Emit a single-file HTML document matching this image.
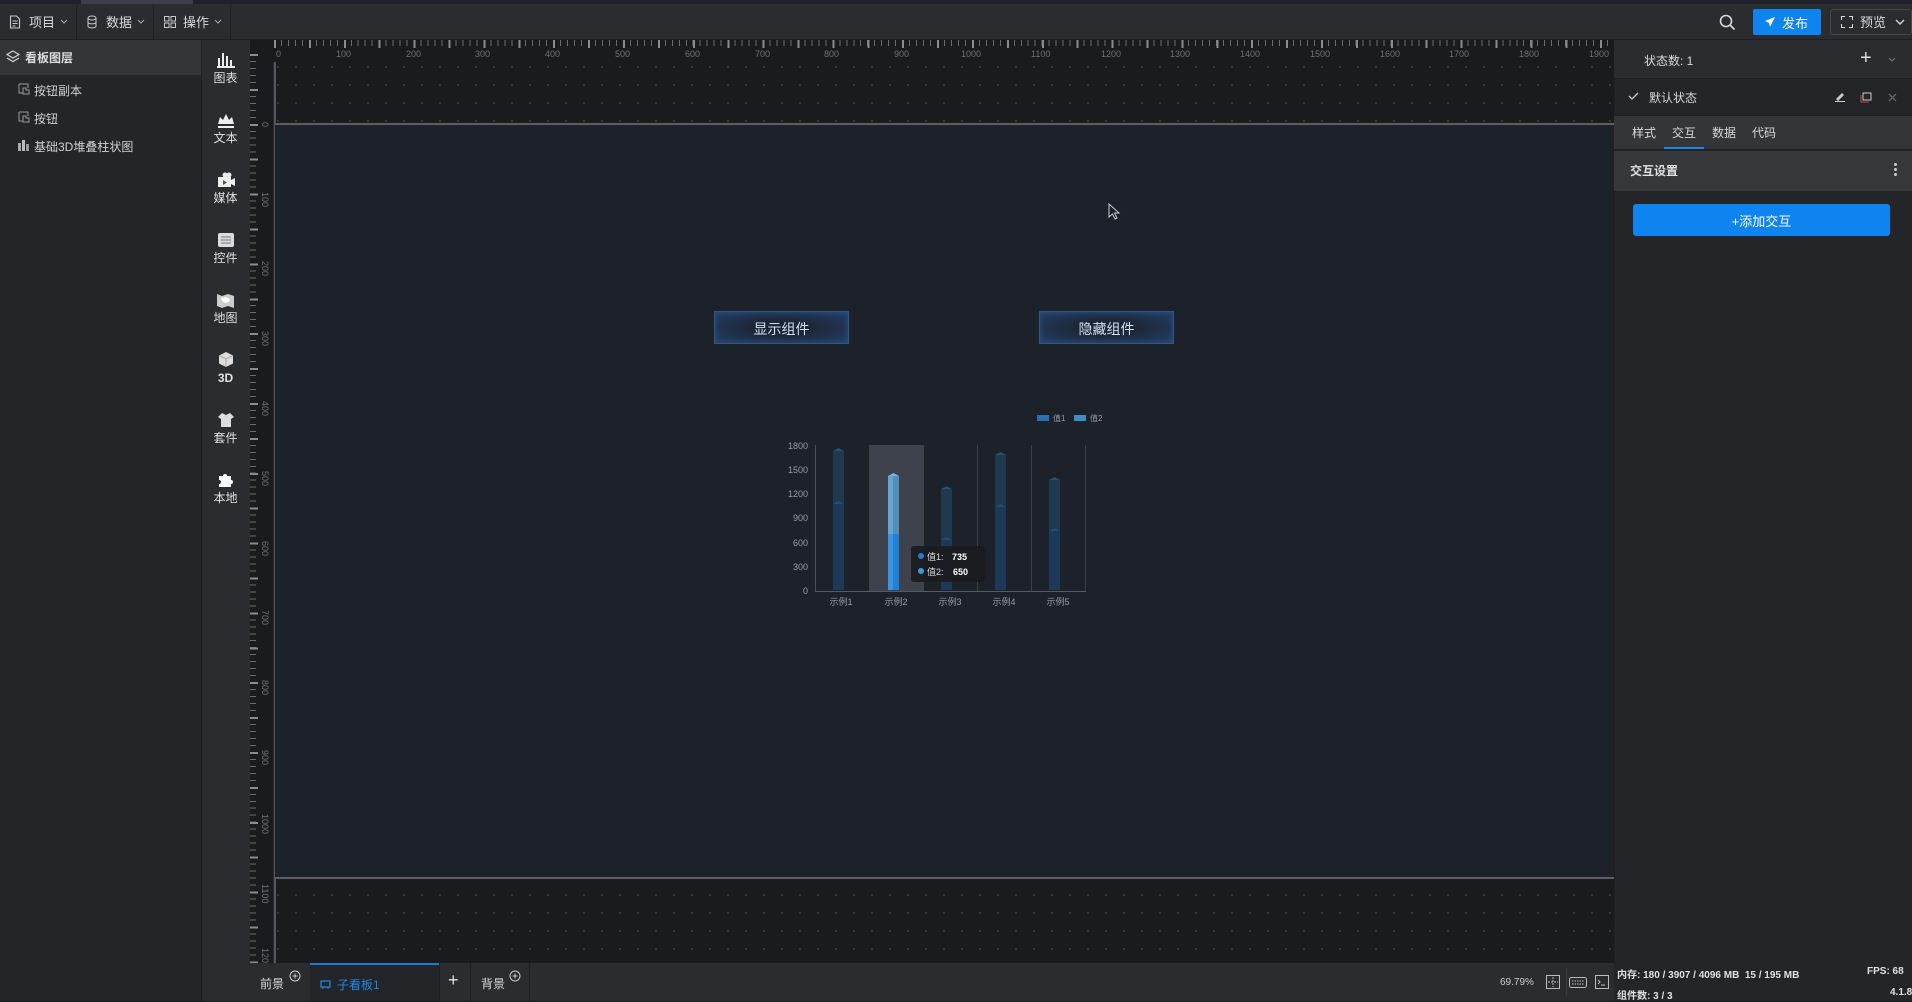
<!DOCTYPE html>
<html><head><meta charset="utf-8"><style>
*{margin:0;padding:0;box-sizing:border-box}
body{width:1912px;height:1001px;overflow:hidden;background:#1a1b1d;font-family:"Liberation Sans","Noto Sans CJK SC",sans-serif;color:#d0d2d6;font-size:12px;position:relative}
.a{position:absolute}
.t{white-space:nowrap}
</style></head><body>
<div class="a" style="left:0;top:0;width:1912px;height:4px;background:#1e2228"></div>
<div class="a" style="left:81px;top:0;width:112px;height:4px;background:#3a3f48"></div>
<div class="a" style="left:0;top:4px;width:1912px;height:36px;background:#2b2c30;border-bottom:1px solid #1f2023"></div>
<div class="a" style="left:76px;top:5px;width:1px;height:34px;background:#1f2023"></div>
<div class="a" style="left:153px;top:5px;width:1px;height:34px;background:#1f2023"></div>
<div class="a" style="left:230px;top:5px;width:1px;height:34px;background:#1f2023"></div>
<svg class="a" style="left:9px;top:15px" width="12" height="14" viewBox="0 0 12 14"><path d="M1.5 1h6l3 3v9h-9z M3.5 6h5 M3.5 8.5h5 M3.5 11h3" fill="none" stroke="#c8c9cc" stroke-width="1.1"/></svg>
<div class="a t" style="left:29px;top:12px;font-size:13px;color:#d8d9dc">项目</div>
<svg class="a" style="left:60px;top:19px" width="8" height="6"><path d="M1 1l3 3 3-3" fill="none" stroke="#aaa"/></svg>
<svg class="a" style="left:87px;top:15px" width="10" height="14"><ellipse cx="5" cy="3" rx="4" ry="2" fill="none" stroke="#c8c9cc"/><path d="M1 3v8c0 2.5 8 2.5 8 0V3 M1 7c0 2.5 8 2.5 8 0" fill="none" stroke="#c8c9cc"/></svg>
<div class="a t" style="left:106px;top:12px;font-size:13px;color:#d8d9dc">数据</div>
<svg class="a" style="left:137px;top:19px" width="8" height="6"><path d="M1 1l3 3 3-3" fill="none" stroke="#aaa"/></svg>
<svg class="a" style="left:164px;top:16px" width="12" height="12"><rect x="0.5" y="0.5" width="4.5" height="4.5" fill="none" stroke="#c8c9cc"/><rect x="7" y="0.5" width="4.5" height="4.5" fill="none" stroke="#c8c9cc"/><rect x="0.5" y="7" width="4.5" height="4.5" fill="none" stroke="#c8c9cc"/><rect x="7" y="7" width="4.5" height="4.5" fill="none" stroke="#c8c9cc"/></svg>
<div class="a t" style="left:183px;top:12px;font-size:13px;color:#d8d9dc">操作</div>
<svg class="a" style="left:214px;top:19px" width="8" height="6"><path d="M1 1l3 3 3-3" fill="none" stroke="#aaa"/></svg>
<svg class="a" style="left:1719px;top:14px" width="17" height="17"><circle cx="7" cy="7" r="5.5" fill="none" stroke="#d8d9dc" stroke-width="1.6"/><path d="M11 11l4.5 4.5" stroke="#d8d9dc" stroke-width="1.8"/></svg>
<div class="a" style="left:1753px;top:9px;width:68px;height:26px;background:#0d84f0;border-radius:2px"></div>
<svg class="a" style="left:1764px;top:16px" width="12" height="12"><path d="M11 1L1 5l4 2 1 4z" fill="#fff"/></svg>
<div class="a t" style="left:1782px;top:13px;font-size:13px;color:#fff">发布</div>
<div class="a" style="left:1830px;top:9px;width:82px;height:26px;border:1px solid #45474c;border-radius:3px"></div>
<svg class="a" style="left:1841px;top:16px" width="12" height="12"><path d="M0.5 4V0.5H4 M8 0.5h3.5V4 M11.5 8v3.5H8 M4 11.5H0.5V8" fill="none" stroke="#d8d9dc"/></svg>
<div class="a t" style="left:1860px;top:12px;font-size:13px;color:#d8d9dc">预览</div>
<svg class="a" style="left:1895px;top:19px" width="10" height="6"><path d="M1 1l4 4 4-4" fill="none" stroke="#d8d9dc" stroke-width="1.4"/></svg>

<div class="a" style="left:0;top:40px;width:201px;height:961px;background:#242528"></div>
<div class="a" style="left:0;top:40px;width:201px;height:35px;background:#343539"></div>
<svg class="a" style="left:6px;top:50px" width="14" height="13"><path d="M7 1l6 3.5-6 3.5-6-3.5z M1 8l6 3.5 6-3.5" fill="none" stroke="#d0d2d6" stroke-width="1.2"/></svg>
<div class="a t" style="left:25px;top:49px;font-size:12px;font-weight:bold;color:#dcdde0">看板图层</div>
<svg class="a" style="left:18px;top:83px" width="12" height="12"><path d="M1 1h9v4 M1 1v9h4 M5 5v6h6V7H8V5z" fill="none" stroke="#999" stroke-width="1"/></svg>
<div class="a t" style="left:34px;top:82px;font-size:12px;color:#d0d2d6">按钮副本</div>
<svg class="a" style="left:18px;top:111px" width="12" height="12"><path d="M1 1h9v4 M1 1v9h4 M5 5v6h6V7H8V5z" fill="none" stroke="#999" stroke-width="1"/></svg>
<div class="a t" style="left:34px;top:110px;font-size:12px;color:#d0d2d6">按钮</div>
<svg class="a" style="left:18px;top:139px" width="12" height="12"><rect x="0" y="4" width="3" height="8" fill="#aaa"/><rect x="4" y="1" width="3" height="11" fill="#bbb"/><rect x="8" y="5" width="3" height="7" fill="#999"/></svg>
<div class="a t" style="left:34px;top:138px;font-size:12px;color:#d0d2d6">基础3D堆叠柱状图</div>

<div class="a" style="left:201px;top:40px;width:49px;height:961px;background:#2b2c30"></div>
<div class="a" style="left:201px;top:40px;width:1px;height:961px;background:#1f2023"></div>
<div style="position:absolute;left:201px;top:52px;width:49px;text-align:center;color:#e0e1e4;font-size:12px;line-height:14px">
<div style="height:60px"><svg width="20" height="16"><rect x="2" y="6" width="2" height="8" fill="#eee"/><rect x="6" y="1" width="2" height="13" fill="#eee"/><rect x="10" y="4" width="2" height="10" fill="#eee"/><rect x="14" y="8" width="2" height="6" fill="#eee"/><rect x="1" y="14" width="18" height="2" fill="#eee"/></svg><br>图表</div>
<div style="height:60px"><svg width="20" height="16"><path d="M2 12l2-7 3 3 3-6 3 6 3-3 2 7z" fill="#eee"/><rect x="2" y="14" width="16" height="2" fill="#eee"/></svg><br>文本</div>
<div style="height:60px"><svg width="20" height="16"><circle cx="9" cy="3" r="2.5" fill="#eee"/><circle cx="13" cy="3" r="2.5" fill="#eee"/><rect x="2" y="5" width="13" height="10" fill="#eee"/><path d="M15 8l4-2v8l-4-2z" fill="#eee"/><path d="M7 8v5l4-2.5z" fill="#555"/></svg><br>媒体</div>
<div style="height:60px"><svg width="20" height="16"><rect x="2" y="1" width="16" height="14" rx="2" fill="#ddd"/><path d="M5 5h10 M5 8h10 M5 11h10" stroke="#777"/></svg><br>控件</div>
<div style="height:60px"><svg width="20" height="16"><path d="M1 2l5 2 6-2 6 2v12l-6-2-6 2-5-2z" fill="#ccc"/><path d="M5 6l5-1 4 2-1 3-4 1-3-2z" fill="#fff"/></svg><br>地图</div>
<div style="height:60px"><svg width="20" height="16"><path d="M10 0l7 3.5v8L10 15 3 11.5v-8z" fill="#ddd"/><path d="M3 3.5L10 7l7-3.5 M10 7v8" stroke="#aaa" fill="none"/></svg><br><b>3D</b></div>
<div style="height:60px"><svg width="20" height="16"><path d="M6 1l4 2 4-2 4 4-3 2v8H5V7L2 5z" fill="#ddd"/></svg><br>套件</div>
<div style="height:60px"><svg width="20" height="16"><path d="M3 4h4a2 2 0 1 1 4 0h4v4a2 2 0 1 1 0 4v3H3v-3a2 2 0 1 0 0-4z" fill="#fff"/></svg><br>本地</div>
</div>

<div class="a" style="left:250px;top:40px;width:1364px;height:22px;background:#1a1b1d"></div>
<div class="a" style="left:274px;top:40px;width:1340px;height:6px;background:repeating-linear-gradient(90deg,#6a6c70 0 1px,transparent 1px 6.979px)"></div>
<div class="a" style="left:274px;top:40px;width:1340px;height:8px;background:repeating-linear-gradient(90deg,#8a8c90 0 2px,transparent 2px 34.9px)"></div>
<div class="a" style="left:250px;top:62px;width:24px;height:901px;background:#1a1b1d;border-right:1px solid #2a2b2e"></div>
<div class="a" style="left:250px;top:54px;width:6px;height:909px;background:repeating-linear-gradient(180deg,#6a6c70 0 1px,transparent 1px 6.979px)"></div>
<div class="a" style="left:250px;top:54px;width:8px;height:909px;background:repeating-linear-gradient(180deg,#8a8c90 0 2px,transparent 2px 34.9px)"></div>
<div style="position:absolute;left:0;top:49px;font-size:9px;color:#6f7276">
<span class="a t" style="left:276px">0</span><span class="a t" style="left:336px">100</span><span class="a t" style="left:406px">200</span><span class="a t" style="left:475px">300</span><span class="a t" style="left:545px">400</span><span class="a t" style="left:615px">500</span><span class="a t" style="left:685px">600</span><span class="a t" style="left:755px">700</span><span class="a t" style="left:824px">800</span><span class="a t" style="left:894px">900</span><span class="a t" style="left:961px">1000</span><span class="a t" style="left:1031px">1100</span><span class="a t" style="left:1101px">1200</span><span class="a t" style="left:1170px">1300</span><span class="a t" style="left:1240px">1400</span><span class="a t" style="left:1310px">1500</span><span class="a t" style="left:1380px">1600</span><span class="a t" style="left:1449px">1700</span><span class="a t" style="left:1519px">1800</span><span class="a t" style="left:1589px">1900</span>
</div>
<div style="position:absolute;left:258px;top:-4px;font-size:9px;color:#6f7276">
<span class="a t" style="top:126px;transform:rotate(90deg);transform-origin:0 0;left:12px">0</span>
<span class="a t" style="top:196px;transform:rotate(90deg);transform-origin:0 0;left:12px">100</span>
<span class="a t" style="top:265px;transform:rotate(90deg);transform-origin:0 0;left:12px">200</span>
<span class="a t" style="top:335px;transform:rotate(90deg);transform-origin:0 0;left:12px">300</span>
<span class="a t" style="top:405px;transform:rotate(90deg);transform-origin:0 0;left:12px">400</span>
<span class="a t" style="top:475px;transform:rotate(90deg);transform-origin:0 0;left:12px">500</span>
<span class="a t" style="top:545px;transform:rotate(90deg);transform-origin:0 0;left:12px">600</span>
<span class="a t" style="top:614px;transform:rotate(90deg);transform-origin:0 0;left:12px">700</span>
<span class="a t" style="top:684px;transform:rotate(90deg);transform-origin:0 0;left:12px">800</span>
<span class="a t" style="top:754px;transform:rotate(90deg);transform-origin:0 0;left:12px">900</span>
<span class="a t" style="top:818px;transform:rotate(90deg);transform-origin:0 0;left:12px">1000</span>
<span class="a t" style="top:888px;transform:rotate(90deg);transform-origin:0 0;left:12px">1100</span>
<span class="a t" style="top:952px;transform:rotate(90deg);transform-origin:0 0;left:12px">1200</span>
</div>

<div class="a" style="left:275px;top:62px;width:1339px;height:901px;background-color:#1a1b1d;background-image:radial-gradient(circle,#3a3b3f 0.9px,transparent 1.2px);background-size:18px 18px;background-position:-6px -4px"></div>
<div class="a" style="left:274px;top:62px;width:2px;height:901px;background:#55575b"></div>
<div class="a" style="left:275px;top:123px;width:1339px;height:756px;background:#1c212a;border-top:2px solid #5c5f64;border-bottom:2px solid #5c5f64"></div>

<div class="a" style="left:714px;top:311px;width:135px;height:33px;border:1px solid #2f5585;background:radial-gradient(ellipse at center,#1d2636 30%,#24406a 100%);box-shadow:inset 0 0 6px #2a5080"></div>
<div class="a t" style="left:714px;top:319px;width:135px;text-align:center;font-size:14px;color:#cfe0f2">显示组件</div>
<div class="a" style="left:1039px;top:311px;width:135px;height:33px;border:1px solid #2f5585;background:radial-gradient(ellipse at center,#1d2636 30%,#24406a 100%);box-shadow:inset 0 0 6px #2a5080"></div>
<div class="a t" style="left:1039px;top:319px;width:135px;text-align:center;font-size:14px;color:#cfe0f2">隐藏组件</div>

<svg class="a" style="left:760px;top:400px" width="360" height="220" viewBox="760 400 360 220" font-family="Liberation Sans, Noto Sans CJK SC, sans-serif">
<rect x="869" y="445" width="55" height="146" fill="#3d424c"/>
<g stroke="#3a3f47"><line x1="977.5" y1="445" x2="977.5" y2="591"/><line x1="1031.5" y1="445" x2="1031.5" y2="591"/><line x1="1085.5" y1="445" x2="1085.5" y2="591"/></g>
<line x1="815.5" y1="445" x2="815.5" y2="591" stroke="#4a4e56"/>
<line x1="815" y1="591.5" x2="1086" y2="591.5" stroke="#555a62"/>
<g fill="#9a9da3" font-size="9" text-anchor="end"><text x="808" y="449">1800</text><text x="808" y="473">1500</text><text x="808" y="497">1200</text><text x="808" y="521">900</text><text x="808" y="546">600</text><text x="808" y="570">300</text><text x="808" y="594">0</text></g>
<g fill="#9a9da3" font-size="9" text-anchor="middle"><text x="841" y="605">示例1</text><text x="896" y="605">示例2</text><text x="950" y="605">示例3</text><text x="1004" y="605">示例4</text><text x="1058" y="605">示例5</text></g>
<rect x="1037" y="415" width="12" height="6" fill="#2a6fb0"/><text x="1053" y="421" font-size="8" fill="#9a9da3">值1</text>
<rect x="1074" y="415" width="12" height="6" fill="#3d8cc4"/><text x="1090" y="421" font-size="8" fill="#9a9da3">值2</text>
<g>
<rect x="833" y="504" width="11" height="86" fill="#1c3a58"/><rect x="833" y="451" width="11" height="53" fill="#1f3a4e"/><path d="M833 451l5.5-3 5.5 3z" fill="#29506e"/><path d="M833 504l5.5-3 5.5 3z" fill="#1f4d78"/>
<rect x="888" y="534" width="11" height="56" fill="#2281d4"/><rect x="888" y="476" width="11" height="58" fill="#4f8fb8"/><rect x="888" y="476" width="5" height="58" fill="#67a5d0"/><rect x="888" y="534" width="5" height="56" fill="#3a95e0"/><path d="M888 476l5.5-3 5.5 3z" fill="#6fb6e8"/>
<rect x="941" y="540" width="11" height="50" fill="#1c3a58"/><rect x="941" y="489" width="11" height="51" fill="#1f3a4e"/><path d="M941 489l5.5-3 5.5 3z" fill="#29506e"/><path d="M941 540l5.5-3 5.5 3z" fill="#1f4d78"/>
<rect x="995" y="507" width="11" height="83" fill="#1c3a58"/><rect x="995" y="455" width="11" height="52" fill="#1f3a4e"/><path d="M995 455l5.5-3 5.5 3z" fill="#29506e"/><path d="M995 507l5.5-3 5.5 3z" fill="#1f4d78"/>
<rect x="1049" y="531" width="11" height="59" fill="#1c3a58"/><rect x="1049" y="480" width="11" height="51" fill="#1f3a4e"/><path d="M1049 480l5.5-3 5.5 3z" fill="#29506e"/><path d="M1049 531l5.5-3 5.5 3z" fill="#1f4d78"/>
</g>
<rect x="911" y="546" width="75" height="36" rx="3" fill="#1a1c20" opacity="0.95"/>
<circle cx="921" cy="556" r="3" fill="#2a78c8"/><text x="927" y="560" font-size="9" fill="#ddd">值1:</text><text x="952" y="560" font-size="9" font-weight="bold" fill="#fff">735</text>
<circle cx="921" cy="571" r="3" fill="#3d9ad8"/><text x="927" y="575" font-size="9" fill="#ddd">值2:</text><text x="953" y="575" font-size="9" font-weight="bold" fill="#fff">650</text>
</svg>
<svg class="a" style="left:1108px;top:203px" width="14" height="18"><path d="M1 1v13l3.5-3 2.5 5 2-1-2.5-5h4.5z" fill="#1c212a" stroke="#ccc"/></svg>

<div class="a" style="left:250px;top:963px;width:1364px;height:38px;background:#2b2c30"></div>
<div class="a" style="left:310px;top:963px;width:129px;height:38px;background:#242528;border-top:2px solid #1c7ad6"></div>
<div class="a" style="left:439px;top:963px;width:1px;height:38px;background:#1f2023"></div>
<div class="a" style="left:470px;top:963px;width:1px;height:38px;background:#1f2023"></div>
<div class="a" style="left:529px;top:963px;width:1px;height:38px;background:#1f2023"></div>
<div class="a t" style="left:260px;top:975px;font-size:12px;color:#d8d9dc">前景</div>
<svg class="a" style="left:289px;top:970px" width="12" height="12"><circle cx="6" cy="6" r="5" fill="none" stroke="#ccc"/><path d="M6 3.5v5M3.5 6h5" stroke="#ccc"/></svg>
<svg class="a" style="left:320px;top:980px" width="11" height="10"><rect x="1" y="1" width="9" height="6" fill="none" stroke="#1e88e5" stroke-width="1.3"/><path d="M3 7v2M8 7v2" stroke="#1e88e5"/></svg>
<div class="a t" style="left:337px;top:976px;font-size:12px;color:#1e88e5">子看板1</div>
<div class="a t" style="left:448px;top:970px;font-size:18px;color:#e0e0e0">+</div>
<div class="a t" style="left:481px;top:975px;font-size:12px;color:#d8d9dc">背景</div>
<svg class="a" style="left:509px;top:970px" width="12" height="12"><circle cx="6" cy="6" r="5" fill="none" stroke="#ccc"/><path d="M6 3.5v5M3.5 6h5" stroke="#ccc"/></svg>
<div class="a t" style="left:1500px;top:977px;font-size:10px;color:#ccc">69.79%</div>
<svg class="a" style="left:1546px;top:975px" width="14" height="14"><rect x="0.5" y="0.5" width="13" height="13" fill="none" stroke="#bbb"/><path d="M7 2v10M2 7h10" stroke="#bbb" stroke-dasharray="2 1"/></svg>
<div class="a" style="left:1566px;top:968px;width:1px;height:28px;background:#3a3b3e"></div>
<svg class="a" style="left:1569px;top:977px" width="18" height="11"><rect x="0.5" y="0.5" width="17" height="10" rx="2" fill="none" stroke="#bbb"/><path d="M3 4h12M3 7h12" stroke="#bbb" stroke-dasharray="1.5 1"/></svg>
<svg class="a" style="left:1595px;top:975px" width="14" height="14"><rect x="0.5" y="0.5" width="13" height="13" fill="none" stroke="#bbb"/><path d="M3 5l2 2-2 2M6 10h4" stroke="#bbb" fill="none"/></svg>

<div class="a" style="left:1614px;top:40px;width:298px;height:961px;background:#242528;border-left:1px solid #1f2023"></div>
<div class="a" style="left:1614px;top:40px;width:298px;height:39px;background:#2b2c30;border-bottom:1px solid #1f2023"></div>
<div class="a t" style="left:1644px;top:52px;font-size:12px;color:#d8d9dc">状态数: 1</div>
<div class="a t" style="left:1860px;top:47px;font-size:20px;color:#ddd">+</div>
<svg class="a" style="left:1888px;top:57px" width="8" height="5"><path d="M1 1l3 3 3-3" fill="none" stroke="#777"/></svg>
<svg class="a" style="left:1628px;top:92px" width="11" height="9"><path d="M1 4l3 3 6-6" fill="none" stroke="#ccc" stroke-width="1.3"/></svg>
<div class="a t" style="left:1649px;top:89px;font-size:12px;color:#d8d9dc">默认状态</div>
<svg class="a" style="left:1834px;top:92px" width="11" height="10"><path d="M2 7l6-6 2 2-6 6z" fill="#ccc"/><path d="M1 9.5h10" stroke="#ccc"/></svg>
<svg class="a" style="left:1860px;top:92px" width="12" height="11"><rect x="3" y="1" width="8" height="7" fill="none" stroke="#ccc"/><path d="M1 3v7h8" fill="none" stroke="#c44"/></svg>
<svg class="a" style="left:1888px;top:93px" width="9" height="9"><path d="M1 1l7 7M8 1l-7 7" stroke="#666" stroke-width="1.3"/></svg>
<div class="a" style="left:1614px;top:115px;width:298px;height:35px;background:#343539;border-top:1px solid #1f2023;border-bottom:1px solid #1f2023"></div>
<div class="a t" style="left:1632px;top:124px;font-size:12px;color:#d8d9dc">样式</div>
<div class="a t" style="left:1672px;top:124px;font-size:12px;color:#d8d9dc">交互</div>
<div class="a" style="left:1664px;top:147px;width:40px;height:2px;background:#1e88e5"></div>
<div class="a t" style="left:1712px;top:124px;font-size:12px;color:#d8d9dc">数据</div>
<div class="a t" style="left:1752px;top:124px;font-size:12px;color:#d8d9dc">代码</div>
<div class="a" style="left:1614px;top:151px;width:298px;height:40px;background:#37383c"></div>
<div class="a t" style="left:1630px;top:162px;font-size:12px;font-weight:bold;color:#e0e1e4">交互设置</div>
<div class="a" style="left:1894px;top:163px;width:3px;height:3px;background:#ccc;border-radius:50%;box-shadow:0 5px #ccc,0 10px #ccc"></div>
<div class="a" style="left:1633px;top:204px;width:257px;height:32px;background:#0d84f0;border-radius:3px"></div>
<div class="a t" style="left:1633px;top:211px;width:257px;text-align:center;font-size:13px;color:#fff">+添加交互</div>
<div class="a" style="left:1614px;top:963px;width:298px;height:38px;background:#242528"></div>
<div class="a t" style="left:1617px;top:966px;font-size:10px;font-weight:bold;color:#e0e0e0">内存: 180 / 3907 / 4096 MB&nbsp; 15 / 195 MB</div>
<div class="a t" style="left:1867px;top:966px;font-size:10px;font-weight:bold;color:#e0e0e0">FPS: 68</div>
<div class="a t" style="left:1617px;top:987px;font-size:10px;font-weight:bold;color:#e0e0e0">组件数: 3 / 3</div>
<div class="a t" style="left:1890px;top:987px;font-size:10px;font-weight:bold;color:#e0e0e0">4.1.8</div>
</body></html>
